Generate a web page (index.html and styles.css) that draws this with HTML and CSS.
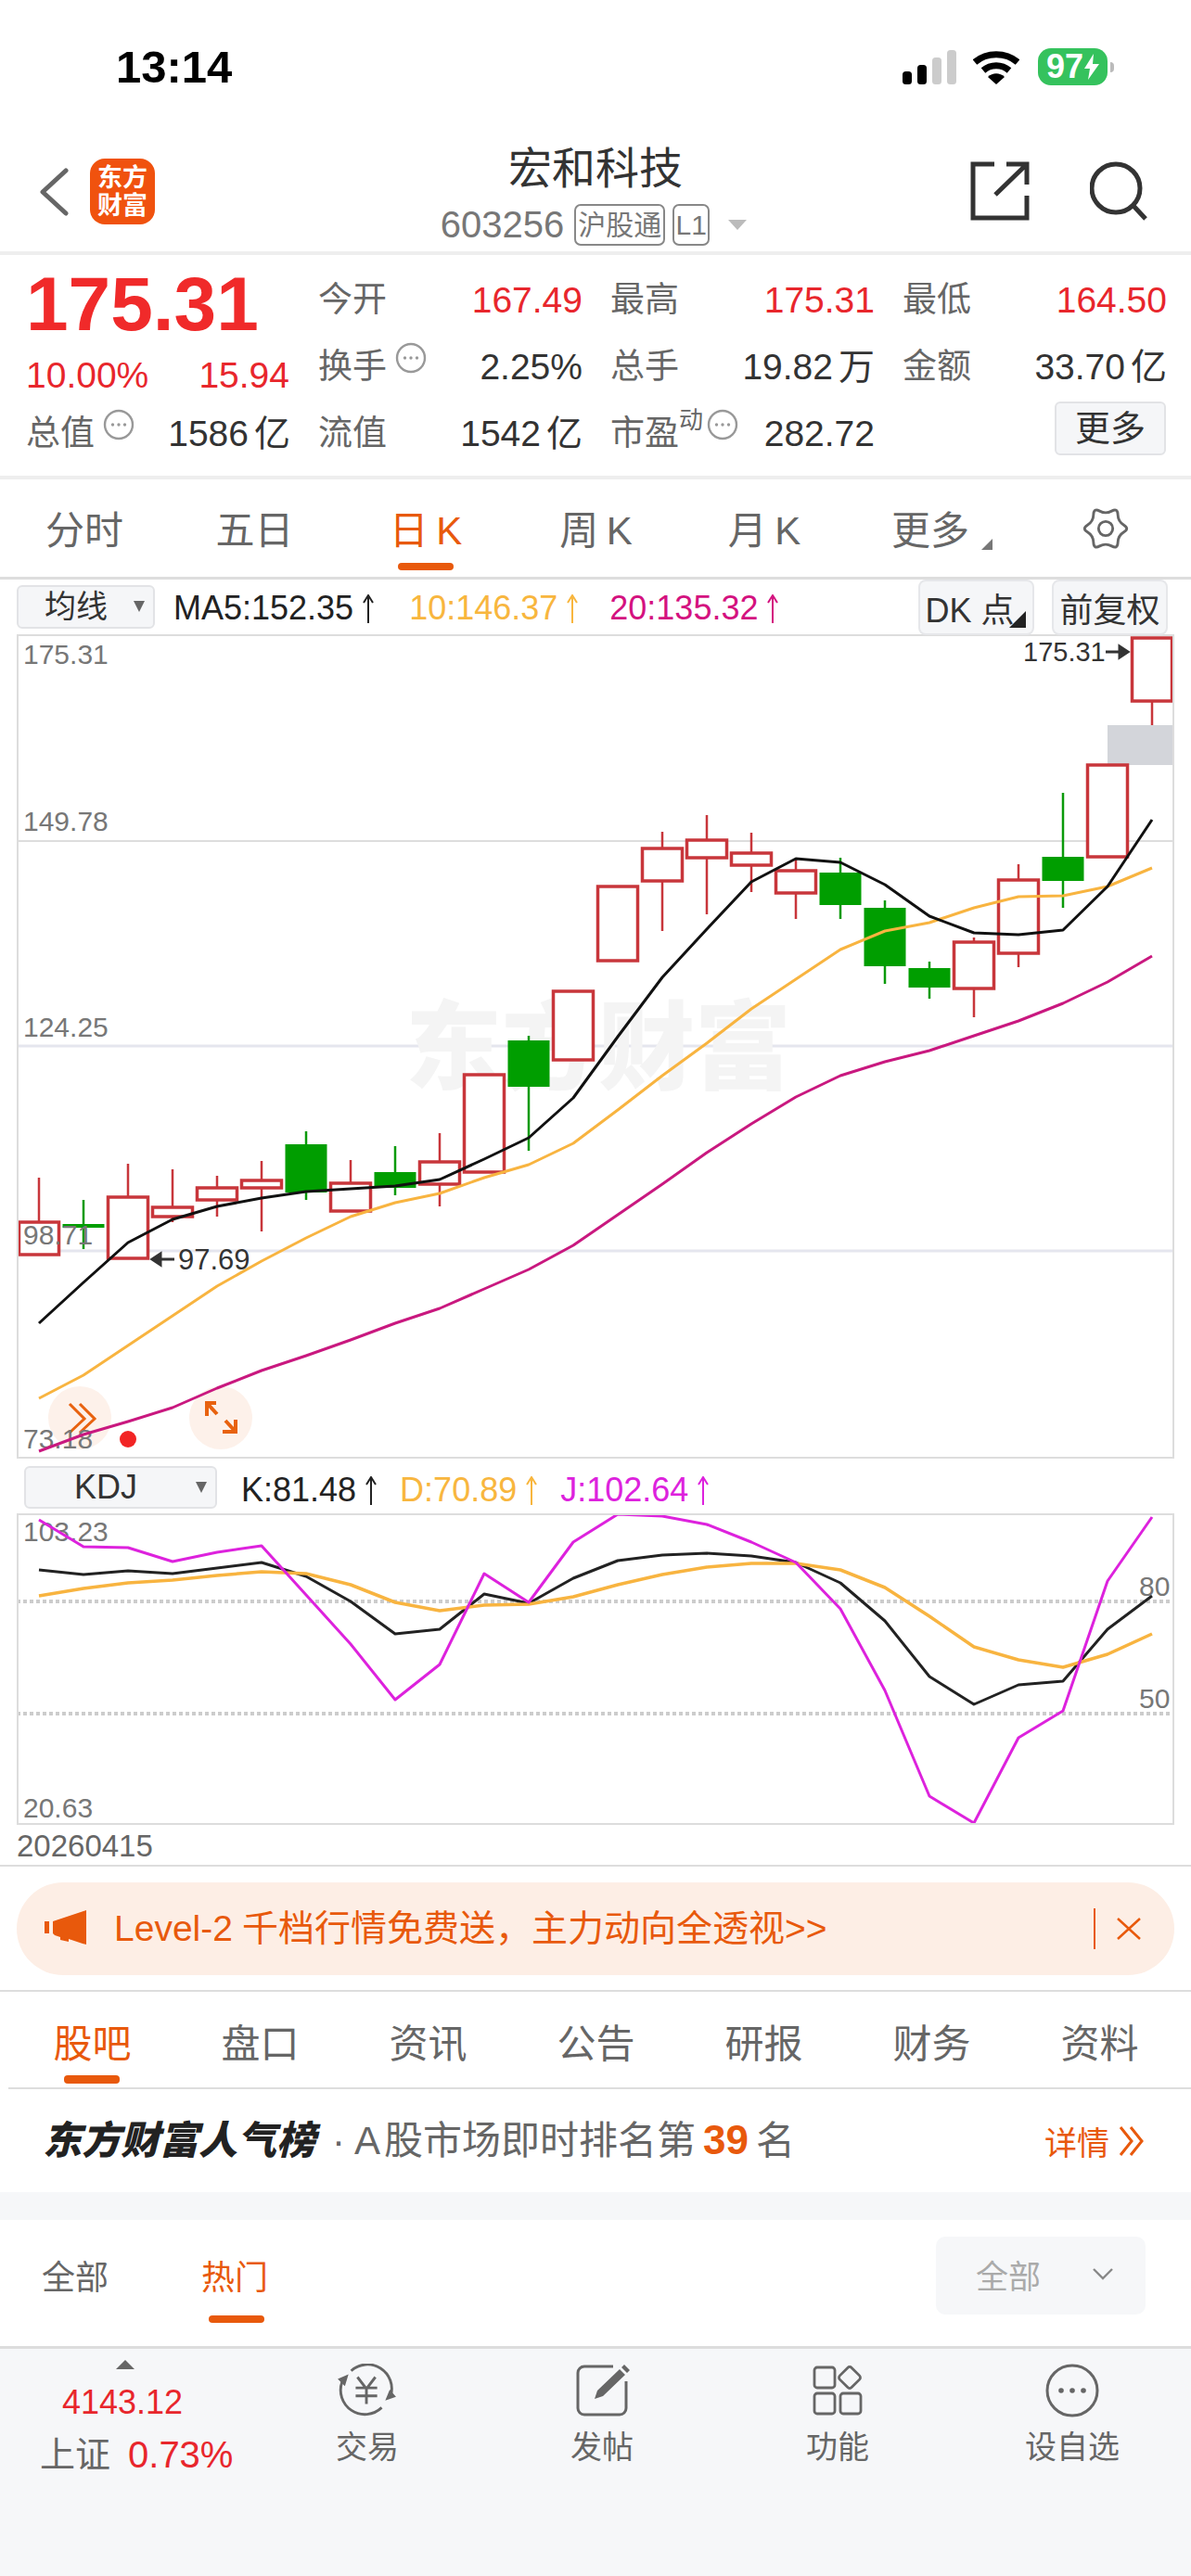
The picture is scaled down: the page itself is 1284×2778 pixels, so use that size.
FILE: index.html
```html
<!DOCTYPE html>
<html lang="zh-CN">
<head>
    <meta charset="UTF-8">
    <meta name="viewport" content="width=device-width, initial-scale=1.0">
    <title>宏和科技</title>
    <link rel="stylesheet" href="styles.css">
</head>
<body>
    <svg class="defs" width="0" height="0">
        <symbol id="upArrow" viewBox="0 0 14 32">
            <path d="M7 31V2M2 9L7 1l5 8" fill="none" stroke="currentColor" stroke-width="2"/>
        </symbol>
        <symbol id="infoDots" viewBox="0 0 34 34">
            <circle cx="17" cy="17" r="15" fill="none" stroke="#999" stroke-width="2.4"/>
            <circle cx="10.5" cy="17" r="1.7" fill="#999"/>
            <circle cx="17" cy="17" r="1.7" fill="#999"/>
            <circle cx="23.5" cy="17" r="1.7" fill="#999"/>
        </symbol>
    </svg>

    <!-- status bar -->
    <div class="status">
        <span class="time">13:14</span>
        <svg class="signal" width="60" height="40" viewBox="0 0 60 40">
            <rect x="2" y="24" width="10" height="14" rx="3.5" fill="#000"/>
            <rect x="18" y="17" width="10" height="21" rx="3.5" fill="#000"/>
            <rect x="34" y="9" width="10" height="29" rx="3.5" fill="#ccc"/>
            <rect x="50" y="1" width="10" height="37" rx="3.5" fill="#ccc"/>
        </svg>
        <svg class="wifi" width="50" height="36" viewBox="0 0 50 36">
            <path d="M2 12C15 1 35 1 48 12" fill="none" stroke="#000" stroke-width="7"/>
            <path d="M11 21C19 14 31 14 39 21" fill="none" stroke="#000" stroke-width="7"/>
            <path d="M16 28C21 23 29 23 34 28L25 36Z" fill="#000"/>
        </svg>
        <div class="battery">
            <span>97</span>
            <svg width="16" height="28" viewBox="0 0 16 28"><path d="M10 0L0 16h6L4 28 16 11H9Z" fill="#fff"/></svg>
        </div>
        <i class="battery-nub"></i>
    </div>

    <!-- title bar -->
    <header class="nav">
        <div class="nav-left">
            <svg width="32" height="52" viewBox="0 0 32 52">
                <path d="M29 3L4 26l25 23" fill="none" stroke="#666" stroke-width="5" stroke-linecap="round" stroke-linejoin="round"/>
            </svg>
            <div class="logo"><span>东方</span><span>财富</span></div>
        </div>
        <div class="nav-title">
            <h1>宏和科技</h1>
            <div class="nav-code">
                <span class="code">603256</span>
                <span class="tag">沪股通</span>
                <span class="tag tag-level">L1</span>
                <i class="code-caret"></i>
            </div>
        </div>
        <div class="nav-right">
            <svg width="64" height="64" viewBox="0 0 64 64">
                <path d="M26 3H3v58h58V37M39 3h22v22M27 36L60 4" fill="none" stroke="#333" stroke-width="5"/>
            </svg>
            <svg width="62" height="64" viewBox="0 0 62 64">
                <circle cx="28" cy="29" r="26" fill="none" stroke="#333" stroke-width="5"/>
                <path d="M47 48l13 14" fill="none" stroke="#333" stroke-width="5"/>
            </svg>
        </div>
    </header>

    <!-- quote block -->
    <section class="quote">
        <div class="cell price-cell"><span class="price">175.31</span></div>
        <div class="cell"><span class="label">今开</span><span class="red">167.49</span></div>
        <div class="cell"><span class="label">最高</span><span class="red">175.31</span></div>
        <div class="cell"><span class="label">最低</span><span class="red">164.50</span></div>

        <div class="cell change-cell"><span class="red">10.00%</span><span class="red">15.94</span></div>
        <div class="cell"><span class="label">换手<svg class="info"><use href="#infoDots"/></svg></span><span>2.25%</span></div>
        <div class="cell"><span class="label">总手</span><span>19.82<span class="unit">万</span></span></div>
        <div class="cell"><span class="label">金额</span><span>33.70<span class="unit">亿</span></span></div>

        <div class="cell"><span class="label">总值<svg class="info"><use href="#infoDots"/></svg></span><span>1586<span class="unit">亿</span></span></div>
        <div class="cell"><span class="label">流值</span><span>1542<span class="unit">亿</span></span></div>
        <div class="cell"><span class="label">市盈<sup>动</sup><svg class="info info-tight"><use href="#infoDots"/></svg></span><span>282.72</span></div>
        <div class="cell more-cell"><button class="more-btn">更多</button></div>
    </section>

    <!-- period tabs -->
    <nav class="period-tabs">
        <a>分时</a>
        <a>五日</a>
        <a class="active">日 K</a>
        <a>周 K</a>
        <a>月 K</a>
        <a class="has-corner">更多<i class="corner"></i></a>
        <a class="gear">
            <svg width="50" height="46" viewBox="-1 0 50 48">
                <path d="M44.45 20Q51 24 44.45 28Q37.9 32 37.7 39.7Q37.5 47.4 30.75 43.7Q24 40 17.25 43.7Q10.5 47.4 10.3 39.7Q10.1 32 3.55 28Q-3 24 3.55 20Q10.1 16 10.3 8.3Q10.5 .6 17.25 4.3Q24 8 30.75 4.3Q37.5 .6 37.7 8.3Q37.9 16 44.45 20Z" fill="none" stroke="#666" stroke-width="3"/>
                <circle cx="24" cy="24" r="8" fill="none" stroke="#666" stroke-width="3"/>
            </svg>
        </a>
    </nav>

    <!-- main chart toolbar -->
    <div class="chart-bar">
        <div class="picker picker-ma">均线</div>
        <span class="legend legend-first black">MA5:152.35<svg class="arrow"><use href="#upArrow"/></svg></span>
        <span class="legend orange">10:146.37<svg class="arrow"><use href="#upArrow"/></svg></span>
        <span class="legend pink">20:135.32<svg class="arrow"><use href="#upArrow"/></svg></span>
        <div class="chart-btns">
            <button class="chart-btn dk">DK 点<i class="corner corner-dark"></i></button>
            <button class="chart-btn">前复权</button>
        </div>
    </div>

    <!-- candlestick chart -->
    <div class="chart chart-main">
        <svg viewBox="20 686 1244 885" width="1244" height="885">
            <rect class="range" x="1194" y="782" width="72" height="43"/>
            <path class="grid" d="M18 907H1266"/>
            <path class="grid grid-soft" d="M18 1128H1266M18 1349H1266"/>
            <text class="watermark" x="437" y="1167">东方财富</text>

            <path class="wick-up" d="M42 1270V1318M138 1255V1291M186 1261V1318M234 1268V1312M282 1252V1328M378 1251V1276M474 1222V1301M714 897V1004M762 879V986M810 898V962M858 927V991M1050 1011V1097M1098 932V1043M1242 756V782"/>
            <path class="wick-down" d="M90 1294V1347M330 1220V1294M426 1236V1289M570 1117V1241M906 925V991M954 971V1061M1002 1037V1077M1146 855V979"/>

            <rect class="up" x="20.5" y="1318" width="43" height="35"/>
            <rect class="up" x="116.5" y="1291" width="43" height="66"/>
            <rect class="up" x="164.5" y="1302" width="43" height="10"/>
            <rect class="up" x="212.5" y="1281" width="43" height="13"/>
            <rect class="up" x="260.5" y="1273" width="43" height="8"/>
            <rect class="up" x="356.5" y="1276" width="43" height="30"/>
            <rect class="up" x="452.5" y="1253" width="43" height="24"/>
            <rect class="up" x="500.5" y="1159" width="43" height="105"/>
            <rect class="up" x="596.5" y="1069" width="43" height="74"/>
            <rect class="up" x="644.5" y="956" width="43" height="80"/>
            <rect class="up" x="692.5" y="915" width="43" height="35"/>
            <rect class="up" x="740.5" y="906" width="43" height="19"/>
            <rect class="up" x="788.5" y="920" width="43" height="13"/>
            <rect class="up" x="836.5" y="939" width="43" height="24"/>
            <rect class="up" x="1028.5" y="1016" width="43" height="50"/>
            <rect class="up" x="1076.5" y="949" width="43" height="79"/>
            <rect class="up" x="1172.5" y="825" width="43" height="99"/>
            <rect class="up" x="1220.5" y="688" width="43" height="68"/>

            <rect class="down" x="67.5" y="1320" width="45" height="4"/>
            <rect class="down" x="307.5" y="1234" width="45" height="52"/>
            <rect class="down" x="403.5" y="1264" width="45" height="17"/>
            <rect class="down" x="547.5" y="1122" width="45" height="50"/>
            <rect class="down" x="883.5" y="941" width="45" height="35"/>
            <rect class="down" x="931.5" y="979" width="45" height="63"/>
            <rect class="down" x="979.5" y="1044" width="45" height="21"/>
            <rect class="down" x="1123.5" y="924" width="45" height="26"/>

            <circle class="bubble" cx="86" cy="1529" r="34"/>
            <path class="bubble-icon" d="M75 1514L91 1530L75 1545M86 1514L102 1530L86 1545"/>
            <circle class="bubble" cx="238" cy="1529" r="34"/>
            <path class="bubble-icon thick" d="M234 1525L223 1513M233 1513H223V1527M243 1532L254 1544M240 1544H254V1531"/>
            <circle class="dot" cx="138" cy="1552" r="9"/>

            <text class="axis" x="25" y="716">175.31</text>
            <text class="axis" x="25" y="896">149.78</text>
            <text class="axis" x="25" y="1118">124.25</text>
            <text class="axis" x="25" y="1342">98.71</text>
            <text class="axis" x="25" y="1562">73.18</text>

            <polyline class="ma ma20" points="42,1565 90,1547 138,1533 186,1518 234,1497 282,1478 330,1462 378,1445 426,1427 474,1411 522,1390 570,1369 618,1343 666,1310 714,1277 762,1243 810,1212 858,1183 906,1160 954,1145 1002,1133 1050,1117 1098,1101 1146,1082 1194,1059 1242,1031"/>
            <polyline class="ma ma10" points="42,1508 90,1483 138,1451 186,1419 234,1387 282,1360 330,1335 378,1312 426,1297 474,1287 522,1270 570,1256 618,1233 666,1197 714,1160 762,1125 810,1088 858,1056 906,1024 954,1004 1002,995 1050,979 1098,967 1146,966 1194,956 1242,936"/>
            <polyline class="ma ma5" points="42,1427 90,1383 138,1340 186,1315 234,1301 282,1292 330,1285 378,1282 426,1279 474,1272 522,1250 570,1227 618,1184 666,1118 714,1054 762,1002 810,951 858,926 906,930 954,954 1002,988 1050,1006 1098,1008 1146,1003 1194,956 1242,884"/>

            <text class="mark" x="1103" y="713">175.31</text>
            <path class="mark-arrow" d="M1192 703H1210M1216 703L1207 697V709Z"/>
            <path class="mark-arrow" d="M170 1358H188M164 1358L173 1352V1364Z"/>
            <text class="mark mark-low" x="192" y="1369">97.69</text>
        </svg>
    </div>

    <!-- indicator toolbar -->
    <div class="chart-bar kdj-bar">
        <div class="picker picker-kdj">KDJ</div>
        <span class="legend black">K:81.48<svg class="arrow"><use href="#upArrow"/></svg></span>
        <span class="legend orange">D:70.89<svg class="arrow"><use href="#upArrow"/></svg></span>
        <span class="legend violet">J:102.64<svg class="arrow"><use href="#upArrow"/></svg></span>
    </div>

    <!-- indicator chart -->
    <div class="chart chart-kdj">
        <svg viewBox="20 1634 1244 332" width="1244" height="332">
            <path class="dash" d="M18 1727H1266M18 1848H1266"/>
            <text class="axis" x="25" y="1662">103.23</text>
            <text class="axis" x="25" y="1960">20.63</text>
            <text class="axis" x="1228" y="1721">80</text>
            <text class="axis" x="1228" y="1842">50</text>
            <polyline class="ma ma-k" points="42,1693 90,1698 138,1694 186,1697 234,1691 282,1685 330,1700 378,1727 426,1762 474,1757 522,1719 570,1729 618,1702 666,1683 714,1677 762,1675 810,1678 858,1685 906,1707 954,1748 1002,1808 1050,1838 1098,1817 1146,1813 1194,1757 1242,1721"/>
            <polyline class="ma ma-d" points="42,1721 90,1713 138,1707 186,1704 234,1699 282,1695 330,1697 378,1709 426,1728 474,1737 522,1731 570,1730 618,1722 666,1709 714,1698 762,1690 810,1686 858,1686 906,1693 954,1712 1002,1743 1050,1776 1098,1790 1146,1798 1194,1784 1242,1762"/>
            <polyline class="ma ma-j" points="42,1639 90,1668 138,1669 186,1684 234,1674 282,1667 330,1720 378,1773 426,1833 474,1795 522,1697 570,1728 618,1663 666,1633 714,1635 762,1644 810,1663 858,1685 906,1735 954,1823 1002,1937 1050,1966 1098,1874 1146,1845 1194,1705 1242,1636"/>
        </svg>
    </div>
    <div class="date-row">20260415</div>

    <!-- promo banner -->
    <div class="banner-wrap">
        <div class="banner">
            <svg width="48" height="40" viewBox="0 0 48 40">
                <path d="M0 12h5v13H0zM9 12L45 0v37L41 36 26 31v3l-9-2v-3l-6-2-2-2z" fill="#e8590c"/>
            </svg>
            <span class="banner-text">Level-2<span class="thin">千档行情免费送，主力动向全透视&gt;&gt;</span></span>
            <i class="banner-sep"></i>
            <svg class="banner-close" width="26" height="24" viewBox="0 0 26 24">
                <path d="M1 1l24 22M25 1L1 23" fill="none" stroke="#e8590c" stroke-width="2.5"/>
            </svg>
        </div>
    </div>

    <!-- content tabs -->
    <nav class="content-tabs">
        <a class="active">股吧</a>
        <a>盘口</a>
        <a>资讯</a>
        <a>公告</a>
        <a>研报</a>
        <a>财务</a>
        <a>资料</a>
    </nav>

    <!-- popularity row -->
    <div class="rank-row">
        <strong class="rank-brand">东方财富人气榜</strong>
        <span class="rank-text"><span class="rank-dot">·</span>A<span class="rank-cn">股市场即时排名第</span><b>39</b><span class="rank-end">名</span></span>
        <span class="rank-link">详情
            <svg width="28" height="32" viewBox="0 0 28 32">
                <path d="M2 1l12 15L2 31M13 1l12 15-12 15" fill="none" stroke="#e8590c" stroke-width="3"/>
            </svg>
        </span>
    </div>

    <div class="gap"></div>

    <!-- post filter -->
    <div class="filter-row">
        <a class="filter">全部</a>
        <a class="filter active">热门</a>
        <div class="filter-select">
            <span>全部</span>
            <svg width="24" height="14" viewBox="0 0 24 14">
                <path d="M2 2l10 10L22 2" fill="none" stroke="#888" stroke-width="2.4"/>
            </svg>
        </div>
    </div>

    <!-- bottom bar -->
    <footer class="bottom">
        <div class="index-box">
            <i class="index-caret"></i>
            <div class="index-value">4143.12</div>
            <div class="index-line"><span>上证</span><b>0.73%</b></div>
        </div>
        <a class="tool tool-trade">
            <svg width="68" height="60" viewBox="0 0 68 60">
                <path d="M16 8A27 27 0 0 1 60 36M6 20A27 27 0 0 0 50 49" fill="none" stroke="#666" stroke-width="3"/>
                <path d="M1 17l12-5-4 13zM66 37l-12 4 5-12z" fill="#666"/>
                <path d="M23 15l10 13 10-13M21 27H45M21 36H45M33 28V45" fill="none" stroke="#666" stroke-width="3"/>
            </svg>
            <span>交易</span>
        </a>
        <a class="tool tool-post">
            <svg width="60" height="58" viewBox="0 0 60 58">
                <path d="M42 3H11a7 7 0 0 0-7 7V48a7 7 0 0 0 7 7H49a7 7 0 0 0 7-7V19" fill="none" stroke="#666" stroke-width="3"/>
                <path d="M22 38l3-9L49 6l6 6-24 23zM51 4l3-3 6 6-3 3z" fill="#666"/>
            </svg>
            <span>发帖</span>
        </a>
        <a class="tool tool-func">
            <svg width="54" height="56" viewBox="0 0 54 56">
                <rect x="2" y="3" width="22" height="22" rx="3" fill="none" stroke="#666" stroke-width="2.8"/>
                <rect x="31" y="5" width="18" height="18" rx="3" transform="rotate(45 40 14)" fill="none" stroke="#666" stroke-width="2.8"/>
                <rect x="2" y="31" width="22" height="22" rx="3" fill="none" stroke="#666" stroke-width="2.8"/>
                <rect x="30" y="31" width="22" height="22" rx="3" fill="none" stroke="#666" stroke-width="2.8"/>
            </svg>
            <span>功能</span>
        </a>
        <a class="tool tool-fav">
            <svg width="58" height="58" viewBox="0 0 58 58">
                <circle cx="29" cy="29" r="27" fill="none" stroke="#666" stroke-width="3"/>
                <circle cx="17" cy="29" r="2.8" fill="#666"/>
                <circle cx="29" cy="29" r="2.8" fill="#666"/>
                <circle cx="41" cy="29" r="2.8" fill="#666"/>
            </svg>
            <span>设自选</span>
        </a>
    </footer>
</body>
</html>
```

FILE: styles.css
```css
* {
    box-sizing: border-box;
}

html, body {
    margin: 0;
    padding: 0;
}

body {
    width: 1284px;
    height: 2778px;
    overflow: hidden;
    background-color: #fff;
    color: #333;
    font-family: "Liberation Sans", "Noto Sans CJK SC", sans-serif;
}

.defs {
    position: absolute;
}

i {
    display: block;
}

button {
    font-family: inherit;
    color: #333;
}

/* status bar */
.status {
    height: 150px;
    display: flex;
    align-items: flex-start;
    padding: 52px 0 0 125px;
}

.time {
    width: 847px;
    font-size: 49px;
    line-height: 40px;
    font-weight: 700;
    color: #000;
}

.signal {
    margin: 1px 0 0 -1px;
}

.wifi {
    margin: 3px 0 0 18px;
}

.battery {
    width: 75px;
    height: 40px;
    margin-left: 20px;
    display: flex;
    align-items: center;
    justify-content: center;
    gap: 1px;
    background-color: #35c25d;
    border-radius: 14px;
    color: #fff;
    font-size: 36px;
    font-weight: 700;
}

.battery-nub {
    width: 4px;
    height: 11px;
    margin: 15px 0 0 3px;
    background-color: #bbb;
    border-radius: 0 4px 4px 0;
}

/* title bar */
.nav {
    height: 125px;
    position: relative;
    display: flex;
    align-items: flex-start;
    justify-content: space-between;
    border-bottom: 4px solid #eee;
    padding: 19px 47px 0 42px;
}

.nav-left {
    display: flex;
    align-items: center;
    gap: 23px;
    padding-top: 2px;
}

.logo {
    width: 70px;
    height: 71px;
    display: flex;
    flex-direction: column;
    align-items: center;
    justify-content: center;
    background-color: #f0520e;
    border-radius: 16px;
    color: #fff;
    font-size: 27px;
    line-height: 30px;
    font-weight: 700;
}

.nav-title {
    position: absolute;
    left: 0;
    right: 0;
    top: 6px;
    display: flex;
    flex-direction: column;
    align-items: center;
}

.nav-title h1 {
    margin: 0;
    font-size: 47px;
    line-height: 52px;
    font-weight: 400;
    color: #333;
}

.nav-code {
    display: flex;
    align-items: center;
    gap: 8px;
    margin-top: 12px;
    padding-right: 4px;
}

.code {
    font-size: 40px;
    line-height: 45px;
    color: #777;
    margin-right: 3px;
}

.tag {
    border: 2px solid #888;
    border-radius: 7px;
    color: #777;
    font-size: 30px;
    line-height: 41px;
    height: 45px;
    width: 98px;
    text-align: center;
    white-space: nowrap;
    overflow: hidden;
}

.tag-level {
    width: 40px;
}

.code-caret {
    margin-left: 12px;
    border-style: solid;
    border-width: 11px 10px 0 10px;
    border-color: #bbb transparent transparent transparent;
}

.nav-right {
    position: relative;
    display: flex;
    gap: 65px;
    padding-top: 5px;
}

/* quote block */
.quote {
    height: 242px;
    display: grid;
    grid-template-columns: repeat(4, 285px);
    grid-auto-rows: 72px;
    column-gap: 30px;
    padding: 13px 0 0 28px;
    border-bottom: 4px solid #eee;
}

.cell {
    display: flex;
    align-items: center;
    justify-content: space-between;
    font-size: 39px;
    line-height: 44px;
    white-space: nowrap;
}

.label {
    display: flex;
    align-items: flex-start;
    color: #666;
    font-size: 37px;
    line-height: 40px;
}

.label sup {
    font-size: 26px;
    line-height: 26px;
    margin-top: -8px;
}

.unit {
    margin-left: 6px;
}

.red {
    color: #e8262c;
}

.price-cell {
    padding-top: 7px;
}

.price {
    font-size: 82px;
    line-height: 70px;
    font-weight: 700;
    color: #f02a2a;
}

.change-cell {
    padding-top: 18px;
    padding-right: 1px;
}

.info {
    width: 34px;
    height: 34px;
    margin: -7px 0 0 9px;
}

.info-tight {
    margin-left: 4px;
}

.more-cell {
    justify-content: flex-end;
    padding-right: 1px;
    padding-bottom: 13px;
}

.more-btn {
    width: 120px;
    height: 58px;
    padding: 0;
    background-color: #f5f6f8;
    border: 2px solid #e2e3e6;
    border-radius: 6px;
    font-size: 38px;
    line-height: 50px;
}

/* period tabs */
.period-tabs {
    height: 108px;
    display: grid;
    grid-template-columns: 182px 185px 184px 183px 180px 178px 192px;
    border-bottom: 3px solid #ddd;
}

.period-tabs a {
    position: relative;
    height: 90px;
    padding-top: 28px;
    text-align: center;
    font-size: 42px;
    line-height: 56px;
    color: #666;
    word-spacing: -3px;
}

.period-tabs .gear {
    padding-left: 8px;
    padding-top: 30px;
}

.period-tabs .active {
    color: #e8590c;
}

.period-tabs .active::after {
    content: "";
    position: absolute;
    left: 62px;
    top: 90px;
    width: 60px;
    height: 8px;
    background-color: #e8590c;
    border-radius: 4px;
}

.corner {
    position: absolute;
    border-style: solid;
}

.has-corner .corner {
    left: 144px;
    top: 64px;
    border-width: 0 0 12px 12px;
    border-color: transparent transparent #777 transparent;
}

/* chart toolbars */
.chart-bar {
    height: 59px;
    display: flex;
    align-items: flex-start;
    padding-left: 18px;
}

.picker {
    position: relative;
    width: 149px;
    height: 47px;
    margin: 6px 20px 0 0;
    padding-left: 28px;
    background-color: #f5f6f8;
    border: 2px solid #e2e3e6;
    border-radius: 6px;
    font-size: 34px;
    line-height: 42px;
}

.picker::after {
    content: "";
    position: absolute;
    right: 9px;
    top: 15px;
    border-style: solid;
    border-width: 12px 6px 0 6px;
    border-color: #666 transparent transparent transparent;
}

.legend {
    display: flex;
    align-items: flex-start;
    margin: 11px 33px 0 0;
    font-size: 36px;
    line-height: 40px;
    white-space: nowrap;
}

.legend-first {
    margin-right: 37px;
}

.arrow {
    width: 14px;
    height: 32px;
    margin: 5px 0 0 9px;
}

.black {
    color: #222;
}

.orange {
    color: #f8b63e;
}

.pink {
    color: #d4127f;
}

.violet {
    color: #dd22dd;
}

.chart-btns {
    margin-left: auto;
    padding-right: 25px;
    display: flex;
    gap: 19px;
}

.chart-btn {
    position: relative;
    width: 125px;
    height: 60px;
    padding: 0;
    background-color: #f5f6f8;
    border: 2px solid #e6e7ea;
    border-radius: 8px;
    font-size: 36px;
    white-space: nowrap;
}

.dk {
    padding-right: 14px;
}

.corner-dark {
    right: 7px;
    bottom: 6px;
    border-width: 0 0 18px 18px;
    border-color: transparent transparent #222 transparent;
}

.kdj-bar {
    padding-left: 26px;
}

.kdj-bar .legend {
    margin-top: 14px;
    margin-right: 24px;
}

.picker-kdj {
    width: 208px;
    height: 46px;
    margin-top: 8px;
    margin-right: 26px;
    padding-left: 52px;
    font-size: 36px;
}

/* charts */
.chart {
    width: 1248px;
    margin-left: 18px;
    border: 2px solid #ddd;
}

.chart svg {
    display: block;
    overflow: hidden;
}

.chart-main {
    height: 889px;
}

.chart-kdj {
    height: 336px;
}

.range {
    fill: #d3d5da;
}

.grid {
    stroke: #ddd;
    stroke-width: 2;
}

.grid-soft {
    stroke: #e5e6ee;
    stroke-width: 3;
}

.watermark {
    font-size: 104px;
    font-weight: 900;
    fill: #f4f4f4;
}

.wick-up {
    stroke: #c8363b;
    stroke-width: 2.5;
    fill: none;
}

.wick-down {
    stroke: #0a9a0a;
    stroke-width: 2.5;
    fill: none;
}

.up {
    fill: #fff;
    stroke: #c8363b;
    stroke-width: 3.5;
}

.down {
    fill: #009e00;
}

.ma {
    fill: none;
    stroke-width: 3;
    stroke-linejoin: round;
}

.ma5 {
    stroke: #111;
}

.ma10 {
    stroke: #f8b440;
}

.ma20 {
    stroke: #c9187f;
}

.ma-k {
    stroke: #222;
}

.ma-d {
    stroke: #f8b440;
    stroke-width: 3.5;
}

.ma-j {
    stroke: #dd22dd;
}

.dash {
    stroke: #ccc;
    stroke-width: 4;
    stroke-dasharray: 4 3;
    fill: none;
}

.axis {
    font-size: 30px;
    fill: #777;
}

.mark {
    font-size: 29px;
    fill: #333;
}

.mark-low {
    font-size: 31px;
}

.mark-arrow {
    fill: #333;
    stroke: #333;
    stroke-width: 3;
}

.bubble {
    fill: #fdf1ea;
}

.bubble-icon {
    fill: none;
    stroke: #e8620f;
    stroke-width: 3;
}

.thick {
    stroke-width: 4;
}

.dot {
    fill: #f22424;
}

.date-row {
    height: 45px;
    padding: 8px 0 0 18px;
    border-bottom: 2px solid #ddd;
    font-size: 33px;
    line-height: 30px;
    color: #666;
}

/* promo banner */
.banner-wrap {
    height: 135px;
    padding: 17px 18px 0;
    border-bottom: 2px solid #ddd;
}

.banner {
    height: 100px;
    display: flex;
    align-items: center;
    padding: 0 36px 0 30px;
    background-color: #fdeee5;
    border-radius: 50px;
}

.banner-text {
    margin-left: 27px;
    font-size: 39px;
    line-height: 44px;
    color: #e8590c;
    white-space: nowrap;
}

.thin {
    margin-left: 10px;
}

.banner-sep {
    width: 2px;
    height: 44px;
    margin-left: auto;
    background-color: #e8590c;
}

.banner-close {
    margin-left: 23px;
}

/* content tabs */
.content-tabs {
    height: 105px;
    margin-left: 9px;
    display: grid;
    grid-template-columns: repeat(7, 181px);
    border-bottom: 2px solid #ddd;
}

.content-tabs a {
    position: relative;
    padding-top: 32px;
    text-align: center;
    font-size: 42px;
    line-height: 50px;
    color: #666;
}

.content-tabs .active {
    color: #e8590c;
}

.content-tabs .active::after {
    content: "";
    position: absolute;
    left: 60px;
    top: 90px;
    width: 60px;
    height: 9px;
    background-color: #e8590c;
    border-radius: 4px;
}

/* popularity row */
.rank-row {
    height: 111px;
    display: flex;
    align-items: center;
    padding: 0 50px 0 46px;
}

.rank-brand {
    font-size: 42px;
    line-height: 46px;
    font-weight: 900;
    font-style: italic;
    color: #222;
}

.rank-text {
    font-size: 42px;
    line-height: 46px;
    color: #666;
    white-space: nowrap;
}

.rank-dot {
    margin: 0 10px 0 18px;
}

.rank-cn {
    margin-left: 4px;
}

.rank-text b {
    margin-left: 8px;
    color: #e8590c;
    font-size: 44px;
}

.rank-end {
    margin-left: 8px;
}

.rank-link {
    margin-left: auto;
    display: flex;
    align-items: center;
    gap: 10px;
    font-size: 35px;
    color: #e8590c;
}

.gap {
    height: 30px;
    background-color: #f6f7f9;
}

/* post filter */
.filter-row {
    height: 136px;
    display: flex;
    align-items: flex-start;
    padding: 18px 49px 0 45px;
}

.filter {
    position: relative;
    width: 172px;
    padding-top: 24px;
    font-size: 36px;
    line-height: 42px;
    color: #666;
}

.filter.active {
    color: #e8590c;
}

.filter.active::after {
    content: "";
    position: absolute;
    left: 8px;
    top: 85px;
    width: 60px;
    height: 8px;
    background-color: #e8590c;
    border-radius: 4px;
}

.filter-select {
    width: 226px;
    height: 84px;
    margin-left: auto;
    display: flex;
    align-items: center;
    justify-content: space-between;
    padding: 0 34px 4px 43px;
    background-color: #f6f7f9;
    border-radius: 10px;
    font-size: 35px;
    color: #aaa;
}

/* bottom bar */
.bottom {
    height: 248px;
    position: relative;
    display: flex;
    align-items: flex-start;
    background-color: #f6f7f9;
    border-top: 3px solid #ddd;
}

.index-box {
    width: 396px;
    height: 130px;
    padding: 12px 0 0 43px;
    flex: none;
}

.index-box, .tool {
    position: relative;
}

.index-caret {
    margin-left: 82px;
    width: 0;
    border-style: solid;
    border-width: 0 10px 10px 10px;
    border-color: transparent transparent #666 transparent;
}

.index-value {
    margin: 18px 0 0 24px;
    font-size: 36px;
    line-height: 36px;
    color: #e8262c;
}

.index-line {
    margin-top: 18px;
    display: flex;
    align-items: center;
    gap: 19px;
    font-size: 38px;
    line-height: 40px;
    color: #666;
}

.index-line b {
    font-size: 40px;
    font-weight: 400;
    color: #e8262c;
}

.tool {
    position: absolute;
    top: 16px;
    width: 160px;
    display: flex;
    flex-direction: column;
    align-items: center;
    font-size: 34px;
    line-height: 40px;
    color: #666;
}

.tool svg {
    height: 58px;
    margin-bottom: 12px;
}

.tool-trade {
    left: 316px;
}

.tool-post {
    left: 569px;
}

.tool-func {
    left: 823px;
}

.tool-fav {
    left: 1076px;
}
```
